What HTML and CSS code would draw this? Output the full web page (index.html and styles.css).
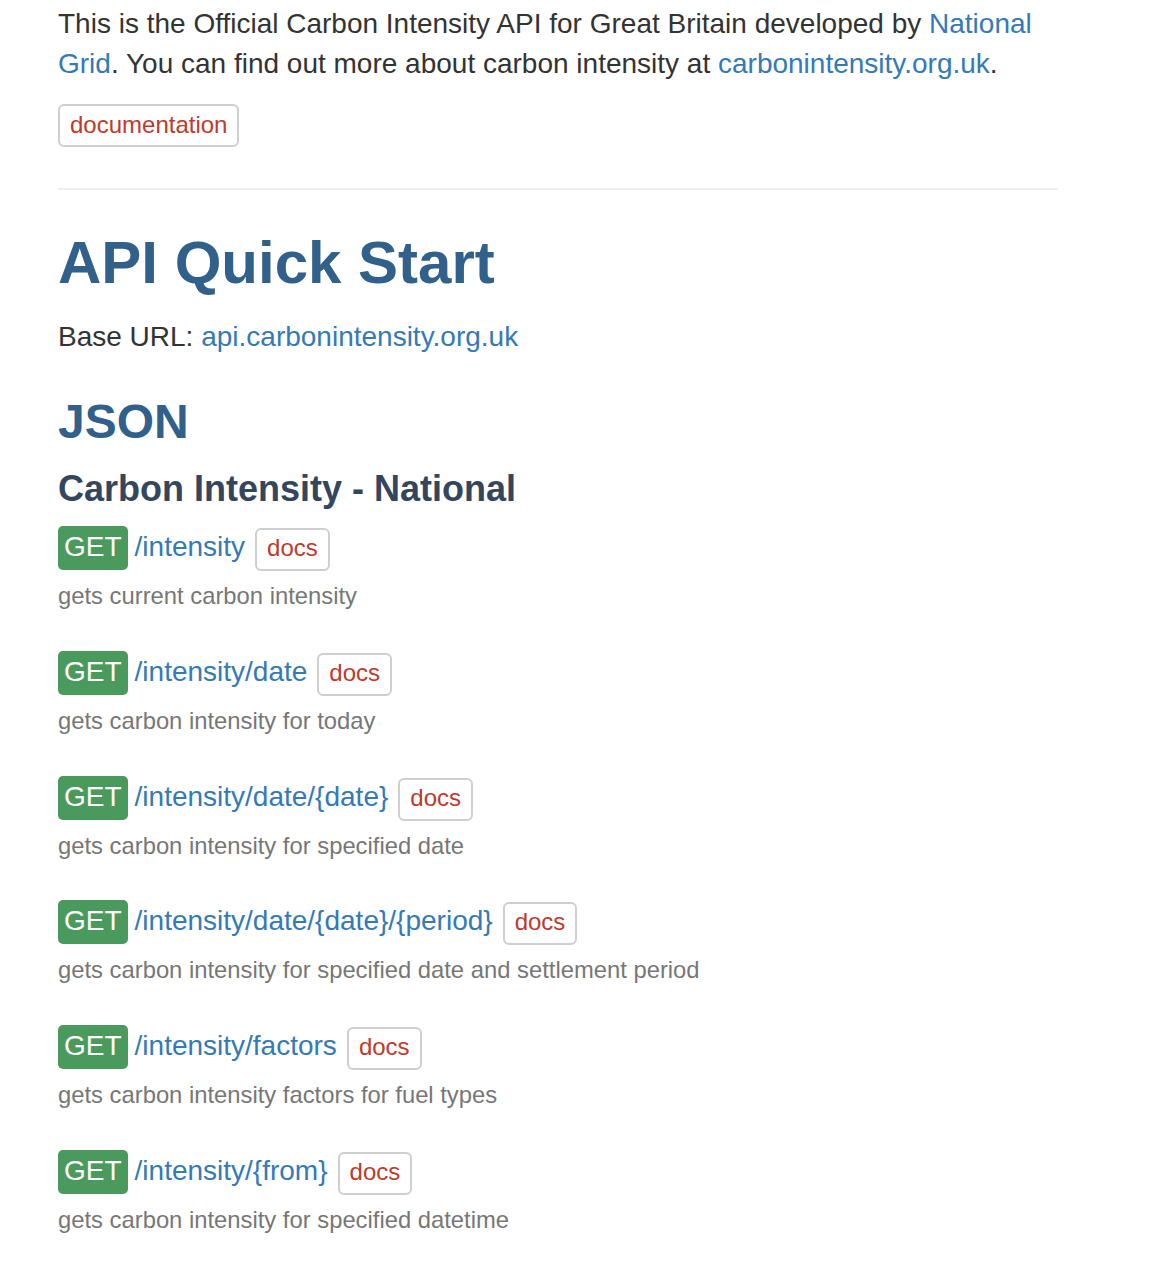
FILE: index.html
```html
<!DOCTYPE html>
<html lang="en">
<head>
<meta charset="utf-8">
<title>Carbon Intensity API</title>
<link rel="stylesheet" href="styles.css">
</head>
<body>
<div class="container">
  <p class="intro">This is the Official Carbon Intensity API for Great Britain developed by <a href="#">National Grid</a>. You can find out more about carbon intensity at <a href="#">carbonintensity.org.uk</a>.</p>
  <div class="doc-wrap"><a class="btn-doc btn-doc-lg" href="#">documentation</a></div>
  <hr class="rule">
  <h1 class="title">API Quick Start</h1>
  <p class="base">Base URL: <a href="#">api.carbonintensity.org.uk</a></p>
  <h2 class="section">JSON</h2>
  <h3 class="group">Carbon Intensity - National</h3>

  <div class="ep">
    <div class="ep-head"><span class="get">GET</span><a class="path" href="#">/intensity</a><a class="btn-doc" href="#">docs</a></div>
    <p class="desc">gets current carbon intensity</p>
  </div>
  <div class="ep">
    <div class="ep-head"><span class="get">GET</span><a class="path" href="#">/intensity/date</a><a class="btn-doc" href="#">docs</a></div>
    <p class="desc">gets carbon intensity for today</p>
  </div>
  <div class="ep">
    <div class="ep-head"><span class="get">GET</span><a class="path" href="#">/intensity/date/{date}</a><a class="btn-doc" href="#">docs</a></div>
    <p class="desc">gets carbon intensity for specified date</p>
  </div>
  <div class="ep">
    <div class="ep-head"><span class="get">GET</span><a class="path" href="#">/intensity/date/{date}/{period}</a><a class="btn-doc" href="#">docs</a></div>
    <p class="desc">gets carbon intensity for specified date and settlement period</p>
  </div>
  <div class="ep">
    <div class="ep-head"><span class="get">GET</span><a class="path" href="#">/intensity/factors</a><a class="btn-doc" href="#">docs</a></div>
    <p class="desc">gets carbon intensity factors for fuel types</p>
  </div>
  <div class="ep">
    <div class="ep-head"><span class="get">GET</span><a class="path" href="#">/intensity/{from}</a><a class="btn-doc" href="#">docs</a></div>
    <p class="desc">gets carbon intensity for specified datetime</p>
  </div>
</div>
</body>
</html>
```
FILE: styles.css
```css
html, body {
  margin: 0;
  padding: 0;
  background: #fff;
}
body {
  font-family: "Liberation Sans", Arial, Helvetica, sans-serif;
  color: #333;
  font-size: 28px;
  line-height: 40px;
}
a {
  color: #337ab7;
  text-decoration: none;
}
.container {
  width: 1000px;
  padding: 4px 0 0 58px;
}
.intro {
  margin: 0 0 20px;
}
.doc-wrap {
  display: flex;
}
.btn-doc {
  display: inline-block;
  font-size: 24px;
  line-height: 24px;
  padding: 6px 10px 9px;
  border: 2px solid #cfcfcf;
  border-radius: 6px;
  color: #c0392b;
  background: #fff;
}
.btn-doc-lg {
  padding: 7px 10px 8px;
}
.rule {
  border: 0;
  border-top: 2px solid #eee;
  height: 0;
  margin: 41px 0 0;
}
.title {
  font-size: 60px;
  line-height: 1.1;
  font-weight: bold;
  color: #31608b;
  margin: 40px 0 0;
}
.base {
  margin: 20.5px 0 0;
}
.section {
  font-size: 48px;
  line-height: 1.1;
  font-weight: bold;
  color: #31608b;
  margin: 39px 0 0;
}
.group {
  font-size: 36px;
  line-height: 1.1;
  font-weight: bold;
  color: #34465e;
  margin: 20.3px 0 17.8px;
}
.ep {
  margin-bottom: 37.8px;
}
.ep-head {
  display: flex;
  align-items: baseline;
}
.get {
  display: inline-block;
  background: #4a9a5e;
  color: #fff;
  font-size: 28px;
  line-height: 28px;
  padding: 7px 6px 9px;
  border-radius: 5px;
}
.path {
  font-size: 28px;
  line-height: 28px;
  margin-left: 7px;
  margin-right: 10px;
}
.desc {
  margin: 8px 0 0;
  font-size: 23.8px;
  line-height: 34px;
  color: #777;
}
```
